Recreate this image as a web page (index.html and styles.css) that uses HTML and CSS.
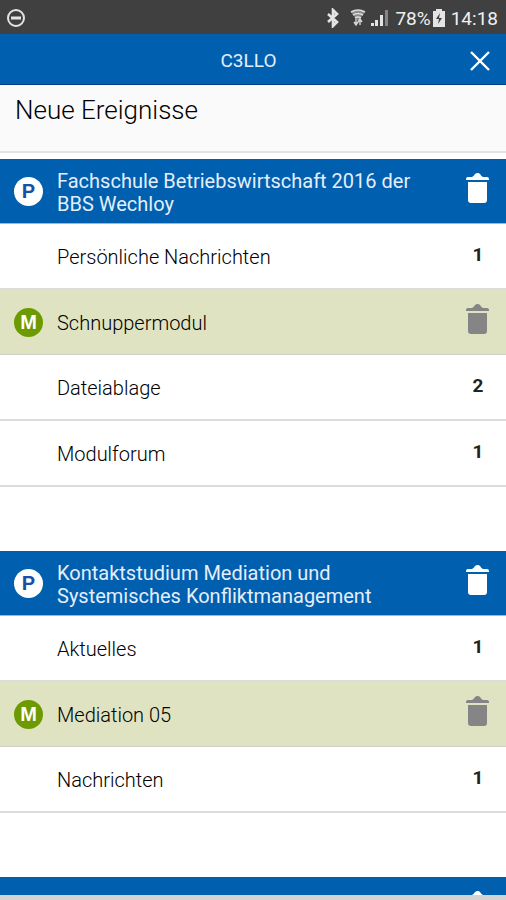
FILE: index.html
```html
<!DOCTYPE html>
<html lang="de">
<head>
    <meta charset="UTF-8">
    <meta name="viewport" content="width=device-width, initial-scale=1.0">
    <title>C3LLO</title>
    <link rel="stylesheet" href="styles.css">
</head>
<body>
    <svg class="symbols" aria-hidden="true">
        <symbol id="trash" viewBox="0 0 24 32">
            <path d="M0 8V7Q0 5 2 5H6Q8 4 9 2Q10 1 12 1Q13 1 14 2Q15 4 17 5H21Q23 5 23 7V8Z"/>
            <path d="M2 10H21V28Q21 31 18 31H5Q2 31 2 28Z"/>
        </symbol>
    </svg>

    <div class="status-bar">
        <svg class="dnd" width="20" height="20" viewBox="0 0 20 20">
            <circle cx="10" cy="10" r="8" fill="none" stroke="#e4e4e4" stroke-width="2"/>
            <path d="M5 10H15" stroke="#e4e4e4" stroke-width="3"/>
        </svg>
        <svg class="bluetooth" width="14" height="20" viewBox="0 0 14 20">
            <path d="M2 6L11 14L7 18V2L11 6L2 14" fill="none" stroke="#e4e4e4" stroke-width="2.6"/>
        </svg>
        <svg class="wifi" width="16" height="18" viewBox="0 0 16 18">
            <path d="M1 3Q8 -1 15 3L8 12Z" fill="#8c8c8c"/>
            <path d="M1 3Q8 -1 15 3M3 6Q8 3 13 6M5 9Q8 7 11 9" fill="none" stroke="#dcdcdc" stroke-width="1.6"/>
            <path d="M6 10V15M4 13L6 16L8 13M10 16V11M8 13L10 10L12 13" fill="none" stroke="#d4d4d4" stroke-width="1.4"/>
        </svg>
        <svg class="signal" width="18" height="18" viewBox="0 0 18 18">
            <path d="M0 14H3V17H0ZM4 11H7V17H4ZM9 6H12V17H9Z" fill="#e4e4e4"/>
            <path d="M14 1H17V17H14Z" fill="#858585"/>
        </svg>
        <span class="battery-text">78%</span>
        <svg class="battery" width="12" height="18" viewBox="0 0 12 18">
            <path d="M3 0H9V2H12V18H0V2H3Z" fill="#e4e4e4"/>
            <path d="M7 4L3 10H6L5 15L9 9H6Z" fill="#404040"/>
        </svg>
        <span class="clock">14:18</span>
    </div>

    <header class="app-bar">
        <span class="app-name">C3LLO</span>
        <button class="close" aria-label="Schließen">
            <svg width="22" height="22" viewBox="0 0 22 22">
                <path d="M2 2L20 20M20 2L2 20" stroke="#fff" stroke-width="2.4"/>
            </svg>
        </button>
    </header>

    <main class="content">
        <h1 class="title">Neue Ereignisse</h1>

        <section class="group">
            <div class="row program">
                <span class="badge">P</span>
                <h2 class="label">Fachschule Betriebswirtschaft 2016 der BBS Wechloy</h2>
                <button class="delete" aria-label="Löschen"><svg><use href="#trash"/></svg></button>
            </div>
            <a class="row" href="#"><span class="label">Persönliche Nachrichten</span><span class="count">1</span></a>
            <div class="row module">
                <span class="badge">M</span>
                <h3 class="label">Schnuppermodul</h3>
                <button class="delete" aria-label="Löschen"><svg><use href="#trash"/></svg></button>
            </div>
            <a class="row" href="#"><span class="label">Dateiablage</span><span class="count">2</span></a>
            <a class="row" href="#"><span class="label">Modulforum</span><span class="count">1</span></a>
        </section>

        <section class="group">
            <div class="row program">
                <span class="badge">P</span>
                <h2 class="label">Kontaktstudium Mediation und Systemisches Konfliktmanagement</h2>
                <button class="delete" aria-label="Löschen"><svg><use href="#trash"/></svg></button>
            </div>
            <a class="row" href="#"><span class="label">Aktuelles</span><span class="count">1</span></a>
            <div class="row module">
                <span class="badge">M</span>
                <h3 class="label">Mediation 05</h3>
                <button class="delete" aria-label="Löschen"><svg><use href="#trash"/></svg></button>
            </div>
            <a class="row" href="#"><span class="label">Nachrichten</span><span class="count">1</span></a>
        </section>

        <section class="group">
            <div class="row program">
                <button class="delete" aria-label="Löschen"><svg><use href="#trash"/></svg></button>
            </div>
        </section>
    </main>

    <div class="bottom-edge"></div>
</body>
</html>
```

FILE: styles.css
```css
* {
    box-sizing: border-box;
}
body {
    margin: 0;
    height: 100vh;
    display: flex;
    flex-direction: column;
    overflow: hidden;
    background: #fff;
    color: #000;
    font-family: Roboto, "Liberation Sans", sans-serif;
    font-size: 20px;
}
button {
    padding: 0;
    border: none;
    background: none;
    cursor: pointer;
}
svg {
    display: block;
}
.symbols {
    position: absolute;
    width: 0;
    height: 0;
}

/* status bar */
.status-bar {
    flex: none;
    display: flex;
    align-items: center;
    height: 34px;
    padding: 2px 8px 0 6px;
    background: #404040;
    color: #f0f0f0;
}
.dnd {
    margin-right: auto;
}
.wifi {
    margin-left: 10px;
}
.signal {
    margin: 0 6px 0 5px;
}
.battery {
    margin: 0 6px 0 2px;
}
.battery-text,
.clock {
    font-size: 19px;
}

/* app bar */
.app-bar {
    flex: none;
    display: grid;
    grid-template-columns: 1fr auto 1fr;
    align-items: center;
    height: 51px;
    padding: 0 15px 0 6px;
    background: #005fae;
    border-bottom: 1px solid #07388f;
    color: #e4eefa;
}
.app-name {
    grid-column: 2;
    padding-top: 2px;
    font-size: 19px;
}
.close {
    justify-self: end;
    padding-top: 4px;
}

/* list */
.content {
    flex: 1;
    min-height: 0;
    overflow: hidden;
}
.title {
    height: 68px;
    margin: 0 0 6px;
    padding: 9px 15px;
    background: #fafafa;
    border-bottom: 2px solid #e6e2e2;
    font-size: 26px;
    font-weight: 300;
    line-height: 32px;
}
.group {
    margin-bottom: 64px;
}
.row {
    display: grid;
    grid-template-columns: 29px 1fr 24px;
    column-gap: 14px;
    align-items: center;
    height: 66px;
    padding: 0 16px 0 14px;
    border-bottom: 2px solid #dcdcdc;
    color: #000;
    text-decoration: none;
}
.label {
    grid-column: 2;
    margin: 0;
    padding-top: 3px;
    font-size: 20px;
    font-weight: 300;
    line-height: 23px;
}
.count {
    padding-bottom: 3px;
    color: #222;
    font-size: 19px;
    font-weight: 700;
    text-align: center;
}
.program {
    height: 65px;
    background: #005fae;
    border-bottom: 1px solid #9fb6d4;
    color: #e4eefa;
}
.program .label {
    padding-right: 30px;
    font-weight: 400;
}
.module {
    height: 65px;
    background: #dfe3c1;
    border-bottom: 1px solid #cfcfc8;
}
.badge {
    display: flex;
    align-items: center;
    justify-content: center;
    width: 29px;
    height: 29px;
    border-radius: 50%;
    background: #fff;
    color: #1650a8;
    font-family: "Liberation Sans", Arial, sans-serif;
    font-weight: 700;
}
.module .badge {
    background: #6c9a00;
    color: #fff;
}
.delete {
    grid-column: 3;
    padding-bottom: 6px;
}
.delete svg {
    width: 24px;
    height: 32px;
    fill: #fff;
}
.module .delete svg {
    fill: #858585;
}

.bottom-edge {
    flex: none;
    height: 5px;
    background: #d3d3d3;
}
```
